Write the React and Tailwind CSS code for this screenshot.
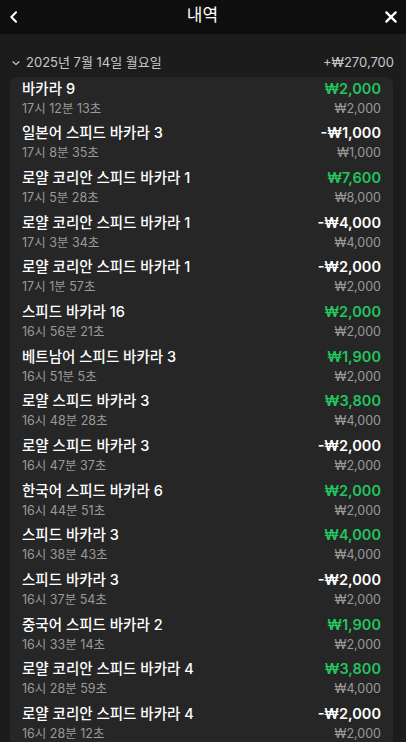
import React from 'react';

const rows = [
  { name: '바카라 9', time: '17시 12분 13초', amount: '₩2,000', win: true, bet: '₩2,000' },
  { name: '일본어 스피드 바카라 3', time: '17시 8분 35초', amount: '-₩1,000', win: false, bet: '₩1,000' },
  { name: '로얄 코리안 스피드 바카라 1', time: '17시 5분 28초', amount: '₩7,600', win: true, bet: '₩8,000' },
  { name: '로얄 코리안 스피드 바카라 1', time: '17시 3분 34초', amount: '-₩4,000', win: false, bet: '₩4,000' },
  { name: '로얄 코리안 스피드 바카라 1', time: '17시 1분 57초', amount: '-₩2,000', win: false, bet: '₩2,000' },
  { name: '스피드 바카라 16', time: '16시 56분 21초', amount: '₩2,000', win: true, bet: '₩2,000' },
  { name: '베트남어 스피드 바카라 3', time: '16시 51분 5초', amount: '₩1,900', win: true, bet: '₩2,000' },
  { name: '로얄 스피드 바카라 3', time: '16시 48분 28초', amount: '₩3,800', win: true, bet: '₩4,000' },
  { name: '로얄 스피드 바카라 3', time: '16시 47분 37초', amount: '-₩2,000', win: false, bet: '₩2,000' },
  { name: '한국어 스피드 바카라 6', time: '16시 44분 51초', amount: '₩2,000', win: true, bet: '₩2,000' },
  { name: '스피드 바카라 3', time: '16시 38분 43초', amount: '₩4,000', win: true, bet: '₩4,000' },
  { name: '스피드 바카라 3', time: '16시 37분 54초', amount: '-₩2,000', win: false, bet: '₩2,000' },
  { name: '중국어 스피드 바카라 2', time: '16시 33분 14초', amount: '₩1,900', win: true, bet: '₩2,000' },
  { name: '로얄 코리안 스피드 바카라 4', time: '16시 28분 59초', amount: '₩3,800', win: true, bet: '₩4,000' },
  { name: '로얄 코리안 스피드 바카라 4', time: '16시 28분 12초', amount: '-₩2,000', win: false, bet: '₩2,000' },
];

const font = { fontFamily: 'Inter, "Noto Sans CJK KR", sans-serif' };

export default function App() {
  return (
    <div className="w-[406px] h-[742px] overflow-hidden bg-[#1c1c1c] text-white" style={font}>
      {/* Header */}
      <div className="h-[34px] bg-[#0e0e0e] flex items-center justify-between px-[6px]">
        <svg width="16" height="16" viewBox="0 0 24 24" fill="none" stroke="white" strokeWidth="3.2" strokeLinecap="round" strokeLinejoin="round">
          <path d="M15 5l-7 7 7 7" />
        </svg>
        <div className="text-[17px] leading-none pb-[4px]">내역</div>
        <svg width="16" height="16" viewBox="0 0 24 24" fill="none" stroke="white" strokeWidth="3.4" strokeLinecap="round" className="mr-[1px]">
          <path d="M5 5l14 14M19 5L5 19" />
        </svg>
      </div>

      {/* Date group */}
      <div className="flex items-center justify-between pl-[11px] pr-[12px] pt-[19px] pb-[4px]">
        <div className="flex items-center gap-[5px] text-[13px] text-[#c8c8c8]">
          <svg width="10" height="10" viewBox="0 0 24 24" fill="none" stroke="#c8c8c8" strokeWidth="3" strokeLinecap="round" strokeLinejoin="round">
            <path d="M5 9l7 7 7-7" />
          </svg>
          <span>2025년 7월 14일 월요일</span>
        </div>
        <span className="text-[13px] text-[#c8c8c8]">+₩270,700</span>
      </div>

      {/* Card */}
      <div className="ml-[10px] mr-[13px] bg-[#262626] rounded-[8px] px-[12px] pt-[1px]">
        {rows.map((r, i) => (
          <div key={i} className="h-[44.7px] flex justify-between">
            <div className="flex flex-col">
              <span className="text-[14.5px] font-medium leading-[22px] text-white">{r.name}</span>
              <span className="text-[12.5px] leading-[17px] text-[#9a9a9a]">{r.time}</span>
            </div>
            <div className="flex flex-col items-end">
              <span className={`text-[14.5px] font-semibold leading-[22px] ${r.win ? 'text-[#22c55e]' : 'text-white'}`}>{r.amount}</span>
              <span className="text-[12.5px] leading-[17px] text-[#9a9a9a]">{r.bet}</span>
            </div>
          </div>
        ))}
      </div>
    </div>
  );
}
